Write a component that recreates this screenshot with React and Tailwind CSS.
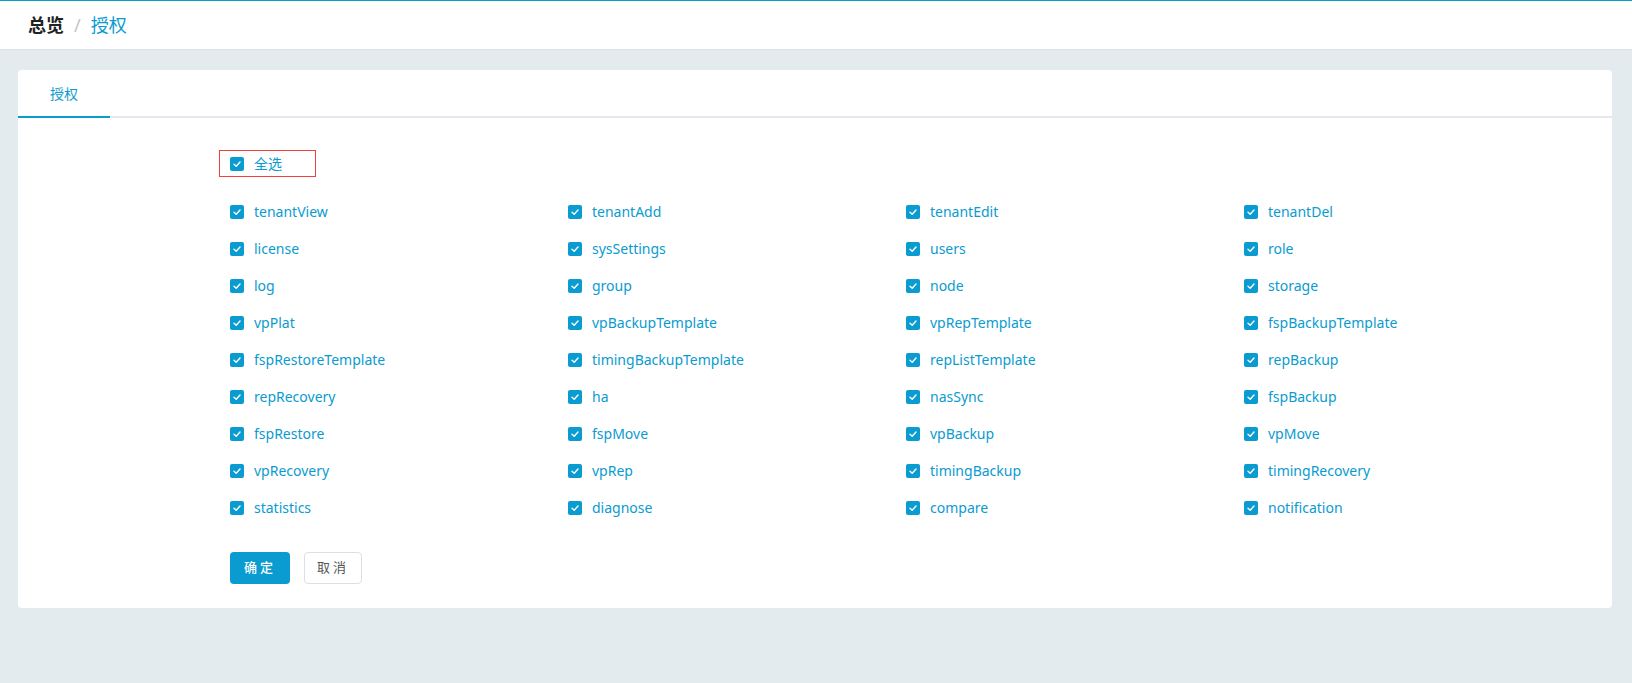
const perms = [
  "tenantView", "tenantAdd", "tenantEdit", "tenantDel",
  "license", "sysSettings", "users", "role",
  "log", "group", "node", "storage",
  "vpPlat", "vpBackupTemplate", "vpRepTemplate", "fspBackupTemplate",
  "fspRestoreTemplate", "timingBackupTemplate", "repListTemplate", "repBackup",
  "repRecovery", "ha", "nasSync", "fspBackup",
  "fspRestore", "fspMove", "vpBackup", "vpMove",
  "vpRecovery", "vpRep", "timingBackup", "timingRecovery",
  "statistics", "diagnose", "compare", "notification",
];

const font = "font-['Noto_Sans','Noto_Sans_CJK_SC',sans-serif]";

const Check = () => (
  <span className="flex h-[14px] w-[14px] shrink-0 items-center justify-center rounded-[2px] bg-[#0a9bd0]">
    <svg width="10" height="10" viewBox="0 0 10 10" fill="none">
      <path d="M2 5.2 L4.2 7.2 L8 3" stroke="#fff" strokeWidth="1.4" strokeLinecap="round" strokeLinejoin="round" />
    </svg>
  </span>
);

export default function App() {
  return (
    <div className={`${font} min-h-screen bg-[#e4ebee]`}>
      <header className="flex h-[50px] items-center gap-[10px] border-t border-b border-t-[#0a9bd0] border-b-[#dbe1e5] bg-white px-[28px] text-[18px]">
        <span className="font-bold text-[#222]">总览</span>
        <span className="text-[#c0c4cc]">/</span>
        <span className="text-[#0a9bd0]">授权</span>
      </header>

      <main className="ml-[18px] mr-[20px] mt-[20px] rounded-[4px] bg-white">
        <div className="flex h-[48px] border-b-2 border-[#e4e7ef]">
          <div className="-mb-[2px] flex w-[92px] items-center justify-center border-b-2 border-[#0a9bd0] text-[14px] text-[#0a9bd0]">
            授权
          </div>
        </div>

        <div className="pl-[201px] pr-[20px] pt-[32px] pb-[24px]">
          <div className="flex h-[27px] w-[97px] items-center gap-[10px] border border-[#f04040] pl-[10px] text-[14px] text-[#0a9bd0]">
            <Check />
            <span>全选</span>
          </div>

          <div className="mt-[16px] grid grid-cols-[338px_338px_338px_338px] pl-[11px]">
            {perms.map((p) => (
              <label key={p} className="flex h-[37px] items-center gap-[10px] text-[14px] text-[#0a9bd0]">
                <Check />
                <span>{p}</span>
              </label>
            ))}
          </div>

          <div className="mt-[26px] flex gap-[14px] pl-[11px]">
            <button className="h-[32px] w-[60px] rounded-[4px] bg-[#0a9bd0] text-[13px] font-medium tracking-[3px] text-white">
              确定
            </button>
            <button className="h-[32px] w-[58px] rounded-[4px] border border-[#dcdfe6] bg-white text-[13px] tracking-[3px] text-[#555]">
              取消
            </button>
          </div>
        </div>
      </main>
    </div>
  );
}
